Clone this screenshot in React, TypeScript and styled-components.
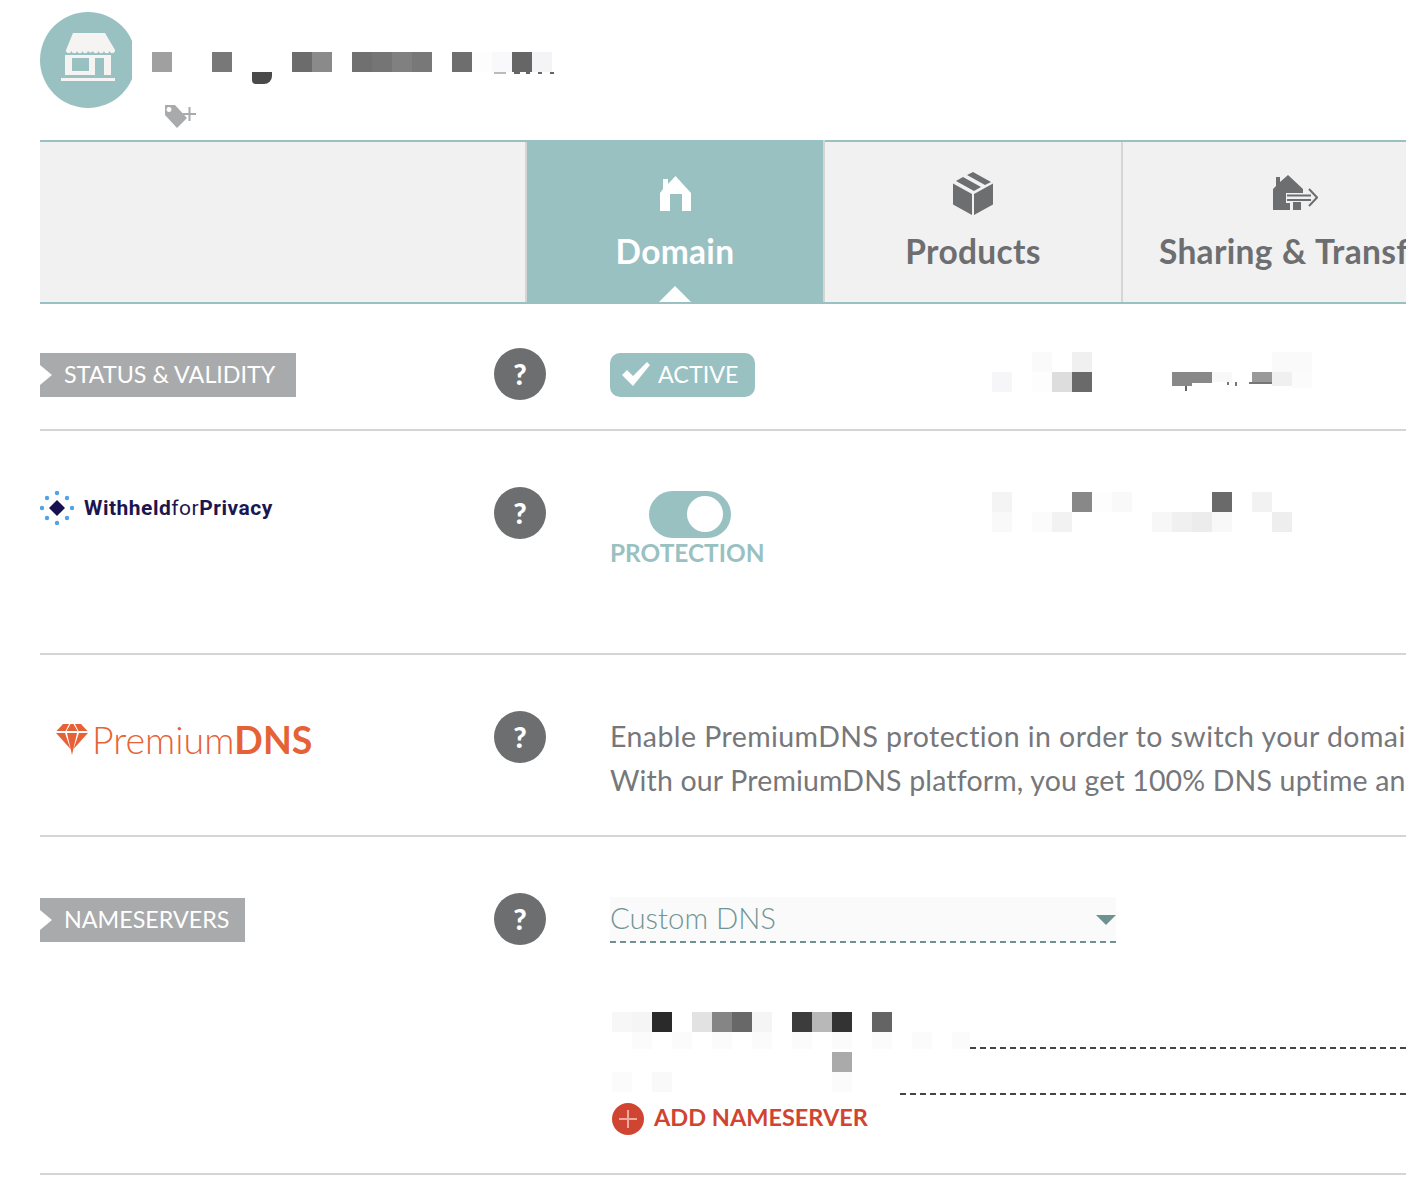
import * as React from 'react';
import styled, { createGlobalStyle } from 'styled-components';

const teal = '#99c1c1';
const grey = '#6d6e70';
const labelGrey = '#a9aaac';
const lineGrey = '#d5d5d5';

type Cell = [number, number, string, number?, number?];

// blurred-out parts of the screenshot, [x, y, colour, height?, width?]
const nameCells: Cell[] = [
	[20, 14, '#a0a0a0'], [80, 14, '#787878'], [160, 14, '#6c6c6c'], [180, 14, '#8a8a8a'],
	[220, 14, '#707070'], [240, 14, '#757575'], [260, 14, '#808080'], [280, 14, '#787878'],
	[320, 14, '#6e6e6e'], [340, 14, '#fdfdfd'], [360, 14, '#f9f9fb'], [380, 14, '#666666'], [400, 14, '#f4f4f6'],
	[362, 34, '#bbbbbb', 2, 12], [382, 34, '#666666', 2, 6], [394, 34, '#666666', 2, 4], [406, 34, '#666666', 2, 4], [418, 34, '#666666', 2, 4],
];
const statusCells: Cell[] = [
	[40, 0, '#fafafa'], [80, 0, '#f0f0f0'], [0, 20, '#f6f6f9'], [40, 20, '#fdfdfd'], [60, 20, '#dddddd'], [80, 20, '#6a6a6a'],
	[180, 20, '#888888', 14], [200, 20, '#888888', 11], [220, 20, '#f8f8f8', 10], [260, 20, '#999999', 10],
	[280, 0, '#fafafa'], [300, 0, '#fafafa'], [280, 20, '#f0f0f0', 14], [300, 20, '#fbfbfb', 16],
	[193, 34, '#666666', 5, 2], [235, 30, '#777777', 3, 2], [243, 30, '#777777', 4, 2], [257, 30, '#777777', 2, 23],
];
const privacyCells: Cell[] = [
	[0, 0, '#f4f4f4'], [80, 0, '#888888'], [100, 0, '#fdfdfd'], [120, 0, '#f9f9f9'], [220, 0, '#6a6a6a'], [260, 0, '#f2f2f2'],
	[0, 20, '#f9f9f9'], [40, 20, '#fbfbfb'], [60, 20, '#f2f2f2'], [160, 20, '#f7f7f7'], [180, 20, '#f0f0f0'],
	[200, 20, '#ececec'], [220, 20, '#f8f8f8'], [280, 20, '#eeeeee'],
];
const serverOneCells: Cell[] = [
	[2, 0, '#f7f7f7'], [22, 0, '#f5f5f5'], [42, 0, '#2a2a2a'], [82, 0, '#e2e2e2'], [102, 0, '#858585'], [122, 0, '#686868'],
	[142, 0, '#f5f5f5'], [182, 0, '#3c3c3c'], [202, 0, '#b8b8b8'], [222, 0, '#333333'], [262, 0, '#646464'],
	[22, 20, '#fbfbfb', 17], [62, 20, '#fbfbfb', 17], [102, 20, '#fbfbfb', 17], [142, 20, '#fbfbfb', 17], [182, 20, '#fbfbfb', 17],
	[222, 20, '#fbfbfb', 17], [262, 20, '#fbfbfb', 17], [302, 20, '#fbfbfb', 17], [342, 20, '#fbfbfb', 17],
];
const serverTwoCells: Cell[] = [
	[222, 3, '#aaaaaa'], [2, 23, '#fbfbfb'], [42, 23, '#f9f9f9'], [222, 23, '#fbfbfb'],
];

const Mosaic = ({ cells, width, height }: { cells: Cell[]; width: number; height: number }) => (
	<MosaicSvg width={width} height={height} viewBox={`0 0 ${width} ${height}`}>
		{cells.map(([x, y, color, h, w], i) => (
			<rect key={i} x={x} y={y} width={w ?? 20} height={h ?? 20} fill={color} />
		))}
	</MosaicSvg>
);

const StoreIcon = () => (
	<svg width="55" height="48" viewBox="0 0 55 48">
		<path
			d="M12 0h32l10 17a2.800 2.800 0 0 1-5.500 1 2.800 2.800 0 0 1-5.500 0 2.800 2.800 0 0 1-5.500 0 2.800 2.800 0 0 1-5.500 0 2.800 2.800 0 0 1-5 0 2.800 2.800 0 0 1-5.500 0 2.800 2.800 0 0 1-5.500 0 2.800 2.800 0 0 1-5.500 0 2.800 2.800 0 0 1-5.500-1z"
			fill="#f5f4f2"
		/>
		<path fillRule="evenodd" d="M4 22h46v20H4zM11 25v13h17V25zM34 25v17h9V25z" fill="#f5f4f2" />
		<rect x="0" y="45" width="54" height="3" fill="#f5f4f2" />
	</svg>
);

const TagPlusIcon = () => (
	<svg width="32" height="26" viewBox="0 0 32 26">
		<path
			fillRule="evenodd"
			d="M1 2h10l12 13-10 10L1 12zM5 4a2.500 2.500 0 1 0 .01 0z"
			fill={labelGrey}
		/>
		<path d="M19 11h13M25.500 4v14" stroke={labelGrey} strokeWidth="2" />
	</svg>
);

const HomeIcon = () => (
	<svg width="31" height="35" viewBox="0 0 31 35">
		<path
			fillRule="evenodd"
			d="M15.500 0 31 17V35H22V18H10V35H0V17L3 13V3H8V8z"
			fill="#fff"
		/>
	</svg>
);

const BoxIcon = () => (
	<svg width="40" height="43" viewBox="0 0 40 43">
		<path d="M0 11.500 19 22V43L0 32.500zM21 22 40 11.500V32.500L21 43z" fill={grey} />
		<path d="M20 0 38 10 32 13 14 3zM10 5 28 15 21 19 3 9z" fill={grey} />
	</svg>
);

const TransferIcon = () => (
	<svg width="45" height="36" viewBox="0 0 45 36">
		<path
			d="M15 0 30 14V18H13V28H17V35H0V14L3 11V2H7V7zM20 27H28V35H20z"
			fill={grey}
		/>
		<path d="M14 20.500H38M14 25H38M36 14l8 8.500-8 8.500" fill="none" stroke={grey} strokeWidth="2" />
	</svg>
);

const CheckIcon = () => (
	<svg width="29" height="24" viewBox="0 0 29 24">
		<path d="M0 13 5 8l6 6L25 0l3 3-17 21z" fill="#fff" />
	</svg>
);

const PrivacyMark = () => (
	<svg width="34" height="34" viewBox="0 0 34 34">
		<path d="M17 9l8 8-8 8-8-8z" fill="#17124f" />
		{[[17, 2], [17, 32], [2, 17], [32, 17], [7, 7], [27, 7], [7, 27], [27, 27]].map(([cx, cy]) => (
			<circle key={`${cx}-${cy}`} cx={cx} cy={cy} r="2.200" fill="#4fa3e8" />
		))}
	</svg>
);

const DiamondIcon = () => (
	<svg width="32" height="31" viewBox="0 0 32 31">
		<path
			d="M7 0h6L9.500 7H0.500zM14.500 0h3l4 7H10.500zM19 0h6l6.500 7h-9zM0 9h9l5.500 16zM11 9h10l-5 22zM23 9h9L17.500 25z"
			fill="#e66236"
		/>
	</svg>
);

const HelpBadge = () => <Help>?</Help>;

export default function App() {
	return (
		<Page>
			<GlobalStyle />
			<Header>
				<Avatar><StoreIcon /></Avatar>
				<HeaderInfo>
					<NameWrap>
						<Mosaic cells={nameCells} width={424} height={47} />
						<Comma />
					</NameWrap>
					<TagLink><TagPlusIcon /></TagLink>
				</HeaderInfo>
			</Header>

			<TabBar>
				<TabSpacer />
				<Tab $active $width={298}>
					<TabIcon><HomeIcon /></TabIcon>
					<TabLabel>Domain</TabLabel>
				</Tab>
				<Tab $width={298}>
					<TabIcon><BoxIcon /></TabIcon>
					<TabLabel>Products</TabLabel>
				</Tab>
				<Tab $width={346}>
					<TabIcon><TransferIcon /></TabIcon>
					<TabLabel $offset={8}>Sharing &amp; Transfer</TabLabel>
				</Tab>
			</TabBar>

			<Row $top={44} $bottom={29}>
				<Ribbon $width={256}>STATUS &amp; VALIDITY</Ribbon>
				<HelpBadge />
				<Detail>
					<ActiveBadge>
						<CheckIcon />
						ACTIVE
					</ActiveBadge>
					<BlurOffset $top={4}><Mosaic cells={statusCells} width={320} height={40} /></BlurOffset>
				</Detail>
			</Row>

			<Row $top={56} $bottom={85}>
				<PrivacyLogo>
					<PrivacyMark />
					<PrivacyName>Withheld<i>for</i>Privacy</PrivacyName>
				</PrivacyLogo>
				<HelpBadge />
				<Detail>
					<ToggleBox>
						<Toggle><Knob /></Toggle>
						<ToggleLabel>PROTECTION</ToggleLabel>
					</ToggleBox>
					<BlurOffset $top={5}><Mosaic cells={privacyCells} width={300} height={40} /></BlurOffset>
				</Detail>
			</Row>

			<Row $top={56} $bottom={33}>
				<DnsLogo>
					<DiamondIcon />
					<DnsName>Premium<b>DNS</b></DnsName>
				</DnsLogo>
				<HelpBadge />
				<Copy>
					<CopyLine $spacing={0.43}>Enable PremiumDNS protection in order to switch your domain</CopyLine>
					<CopyLine $spacing={0.16}>With our PremiumDNS platform, you get 100% DNS uptime and</CopyLine>
				</Copy>
			</Row>

			<Row $top={56} $bottom={38}>
				<Ribbon $width={205}>NAMESERVERS</Ribbon>
				<HelpBadge />
				<Servers>
					<Select>
						Custom DNS
						<Caret />
					</Select>
					<ServerField>
						<Mosaic cells={serverOneCells} width={360} height={37} />
						<Dash />
					</ServerField>
					<ServerField>
						<Mosaic cells={serverTwoCells} width={290} height={46} />
						<Dash />
					</ServerField>
					<AddButton>
						<AddCircle />
						<AddLabel>ADD NAMESERVER</AddLabel>
					</AddButton>
				</Servers>
			</Row>
		</Page>
	);
}

const GlobalStyle = createGlobalStyle`
	html, body {
		margin: 0;
		padding: 0;
		background: #fff;
		overflow: hidden;
	}
	* {
		box-sizing: border-box;
	}
`;

const Page = styled.div`
	width: 1406px;
	height: 1190px;
	padding-left: 40px;
	overflow: hidden;
	font-family: Lato, "Open Sans", sans-serif;
`;

const MosaicSvg = styled.svg`
	display: block;
	flex: none;
`;

const Header = styled.div`
	display: flex;
	height: 140px;
	padding-top: 12px;
`;

const Avatar = styled.div`
	width: 96px;
	height: 96px;
	flex: none;
	border-radius: 50%;
	background: ${teal};
	display: flex;
	align-items: center;
	justify-content: center;
	padding: 0 0 6px 1px;
`;

const HeaderInfo = styled.div`
	display: flex;
	flex-direction: column;
	margin-left: -4px;
	padding-top: 26px;
`;

const NameWrap = styled.div`
	position: relative;
	background: #fff;
`;

const Comma = styled.span`
	position: absolute;
	left: 120px;
	top: 34px;
	width: 20px;
	height: 12px;
	background: #4a4a4a;
	border-radius: 0 0 8px 4px;
`;

const TagLink = styled.a`
	display: block;
	margin: 18px 0 0 32px;
	height: 26px;
`;

const TabBar = styled.div`
	display: flex;
	height: 164px;
	border-top: 2px solid ${teal};
	border-bottom: 2px solid ${teal};
	background: #f1f1f2;
`;

const TabSpacer = styled.div`
	width: 487px;
	flex: none;
	border-right: 2px solid ${lineGrey};
`;

const Tab = styled.div<{ $active?: boolean; $width: number }>`
	position: relative;
	flex: none;
	width: ${p => p.$width}px;
	border-right: 2px solid ${lineGrey};
	background: ${p => (p.$active ? teal : 'transparent')};
	color: ${p => (p.$active ? '#fff' : grey)};
	display: flex;
	flex-direction: column;
	align-items: center;
	padding-top: 29px;

	${p => p.$active && `
		margin-top: -2px;
		padding-top: 31px;
		&::after {
			content: '';
			position: absolute;
			left: 132px;
			bottom: 0;
			border-left: 16px solid transparent;
			border-right: 16px solid transparent;
			border-bottom: 16px solid #fff;
		}
	`}
`;

const TabIcon = styled.div`
	height: 44px;
	display: flex;
	align-items: center;
`;

const TabLabel = styled.div<{ $offset?: number }>`
	margin-top: 16px;
	margin-left: ${p => p.$offset ?? 0}px;
	font-size: 33.500px;
	line-height: 40px;
	font-weight: 700;
	letter-spacing: 0.300px;
	word-spacing: 1px;
	white-space: nowrap;
`;

const Row = styled.div<{ $top: number; $bottom: number }>`
	display: grid;
	grid-template-columns: 454px 116px 1fr;
	padding: ${p => p.$top}px 0 ${p => p.$bottom}px;
	border-bottom: 2px solid ${lineGrey};
`;

const Ribbon = styled.div<{ $width: number }>`
	width: ${p => p.$width}px;
	height: 44px;
	margin-top: 5px;
	padding-left: 24px;
	background: ${labelGrey};
	color: #fff;
	font-size: 23.300px;
	font-weight: 400;
	line-height: 42px;
	white-space: nowrap;
	clip-path: polygon(0 0, 100% 0, 100% 100%, 0 100%, 0 32px, 12px 50%, 0 12px);
`;

const Help = styled.div`
	width: 52px;
	height: 52px;
	border-radius: 50%;
	background: ${grey};
	color: #fff;
	font-size: 29px;
	font-weight: 900;
	line-height: 52px;
	text-align: center;
`;

const Detail = styled.div`
	display: grid;
	grid-template-columns: 382px 1fr;
	align-items: start;
`;

const BlurOffset = styled.div<{ $top: number }>`
	margin-top: ${p => p.$top}px;
`;

const ActiveBadge = styled.div`
	justify-self: start;
	width: 145px;
	height: 44px;
	margin-top: 5px;
	padding: 0 0 3px 12px;
	display: flex;
	align-items: center;
	gap: 7px;
	border-radius: 10px;
	background: ${teal};
	color: #fff;
	font-size: 23.300px;
	font-weight: 400;
`;

const PrivacyLogo = styled.div`
	display: flex;
	align-items: center;
	height: 34px;
	margin-top: 4px;
	gap: 10px;
`;

const PrivacyName = styled.div`
	color: #1b1650;
	font-family: Roboto, sans-serif;
	font-size: 21px;
	font-weight: 700;
	letter-spacing: 0.500px;

	i {
		font-style: normal;
		font-weight: 400;
	}
`;

const ToggleBox = styled.div`
	padding-top: 4px;
`;

const Toggle = styled.div`
	width: 82px;
	height: 47px;
	margin-left: 39px;
	padding: 5px 8px;
	display: flex;
	justify-content: flex-end;
	border-radius: 24px;
	background: ${teal};
`;

const Knob = styled.div`
	width: 36px;
	height: 36px;
	border-radius: 50%;
	background: #fff;
`;

const ToggleLabel = styled.div`
	color: ${teal};
	font-size: 24.400px;
	font-weight: 700;
	line-height: 30px;
	white-space: nowrap;
`;

const DnsLogo = styled.div`
	display: flex;
	align-items: center;
	height: 50px;
	margin-top: 3px;
	padding-left: 16px;
	gap: 4px;
`;

const DnsName = styled.div`
	color: #e66236;
	font-size: 37.500px;
	font-weight: 300;

	b {
		font-weight: 700;
	}
`;

const Copy = styled.div`
	padding-top: 3px;
`;

const CopyLine = styled.div<{ $spacing: number }>`
	color: #76777a;
	font-size: 28.500px;
	font-weight: 400;
	line-height: 44px;
	letter-spacing: ${p => p.$spacing}px;
	white-space: nowrap;
`;

const Servers = styled.div`
	display: flex;
	flex-direction: column;
	align-items: stretch;
	padding-top: 4px;
`;

const Select = styled.div`
	position: relative;
	width: 506px;
	height: 46px;
	margin-bottom: 69px;
	background: #fafafa;
	border-bottom: 2px dashed #6f9191;
	color: #6f9595;
	font-size: 29.300px;
	font-weight: 300;
	line-height: 42px;
`;

const Caret = styled.span`
	position: absolute;
	right: 0;
	top: 18px;
	border-left: 10px solid transparent;
	border-right: 10px solid transparent;
	border-top: 10px solid #6f9191;
`;

const ServerField = styled.div`
	display: flex;
	align-items: flex-end;
`;

const Dash = styled.div`
	flex: 1;
	border-bottom: 2px dashed #444;
`;

const AddButton = styled.div`
	display: flex;
	align-items: center;
	gap: 10px;
	height: 32px;
	margin-top: 8px;
	padding-left: 2px;
	color: #cf4531;
	font-size: 23.500px;
	font-weight: 700;
`;

const AddLabel = styled.span`
	margin-top: -4px;
`;

const AddCircle = styled.span`
	position: relative;
	width: 32px;
	height: 32px;
	border-radius: 50%;
	background: #cf4531;

	&::before, &::after {
		content: '';
		position: absolute;
		background: #f0a99d;
	}
	&::before {
		left: 7px;
		top: 15px;
		width: 18px;
		height: 2px;
	}
	&::after {
		left: 15px;
		top: 7px;
		width: 2px;
		height: 18px;
	}
`;
